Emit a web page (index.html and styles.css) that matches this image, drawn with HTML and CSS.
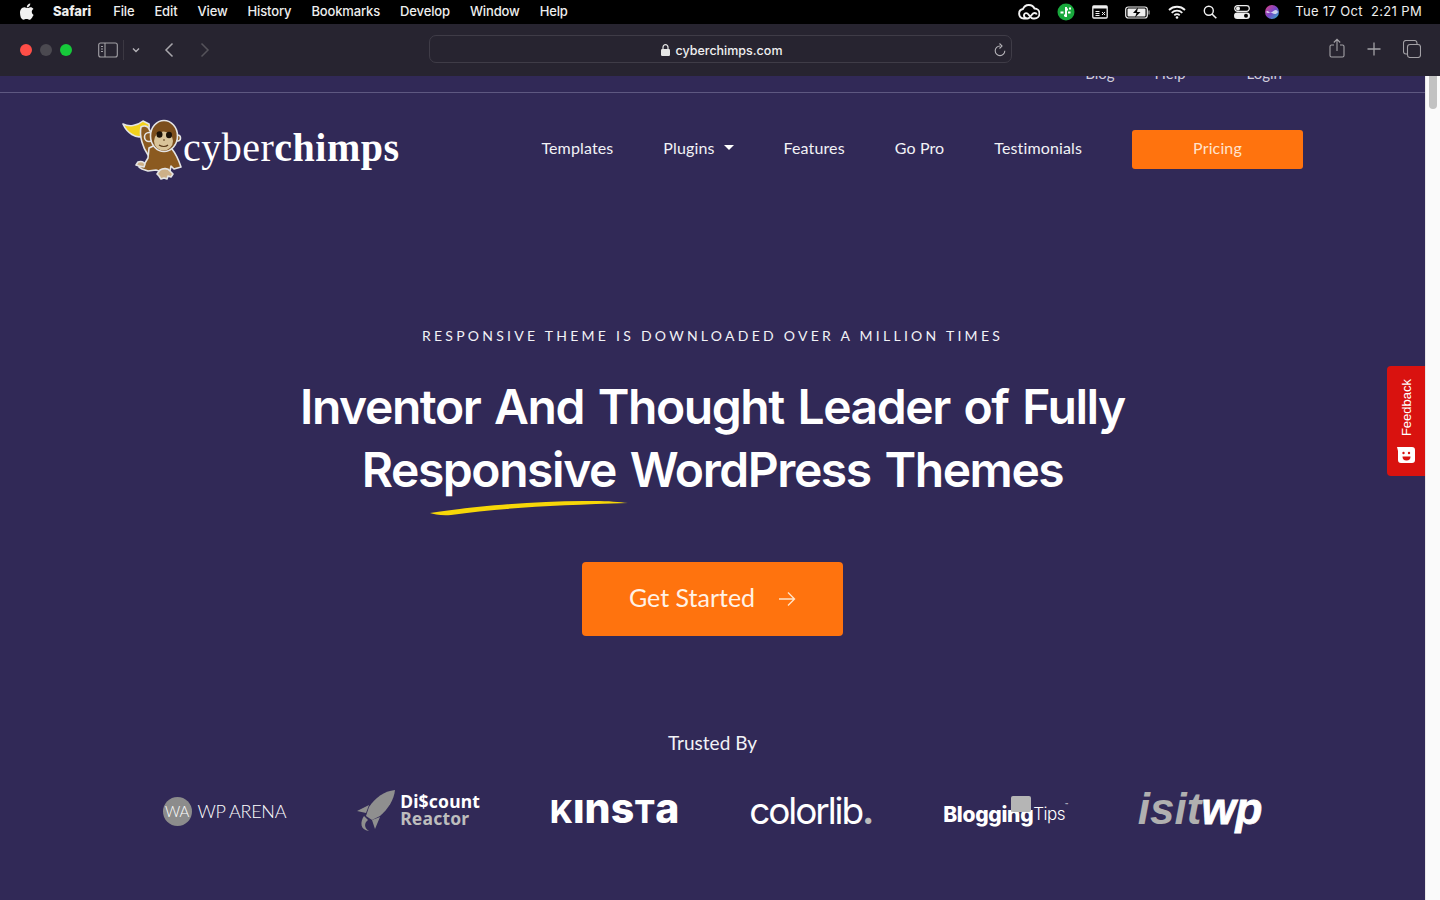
FILE: index.html
```html
<!DOCTYPE html>
<html lang="en">
<head>
<meta charset="utf-8">
<title>CyberChimps</title>
<link rel="stylesheet" href="styles.css">
</head>
<body>
<div class="menubar">
  <div class="menu-left">
    <svg class="apple" width="14" height="17" viewBox="0 0 14 17"><path fill="#f2f2f2" d="M10.3 0.5c.1 1.1-.3 2-1 2.8-.7.8-1.6 1.2-2.5 1.1-.1-1 .4-2 1-2.7C8.500 1 9.500.6 10.300.5zM13.300 12.300c-.4.9-.6 1.300-1.100 2.100-.7 1.100-1.700 2.400-2.900 2.400-1.100 0-1.400-.7-2.800-.7-1.500 0-1.800.7-2.900.7-1.200 0-2.100-1.200-2.800-2.300C-.200 11.400-.4 7.900 1 6.200 1.900 5 3.200 4.300 4.400 4.300c1.300 0 2 .8 3 .8s1.700-.8 3.100-.8c1.100 0 2.200.6 3 1.600-2.600 1.500-2.200 5.300.8 6.400z"/></svg>
    <span class="app-name">Safari</span><span>File</span><span>Edit</span><span>View</span><span>History</span><span>Bookmarks</span><span>Develop</span><span>Window</span><span>Help</span>
  </div>
  <div class="menu-right">
    <svg width="22" height="16" viewBox="0 0 22 16"><g fill="none" stroke="#f2f2f2" stroke-width="1.900"><path d="M8 14.500H5.800A4.800 4.800 0 0 1 5 5 6.300 6.300 0 0 1 16.500 4.500 5 5 0 0 1 16.500 14.500H15C13 14.500 12 12.500 10.500 10.500 9 8.500 6.500 8.800 6 11c-.3 2 1.500 3.500 3.500 3.500 2 0 3-2 4.500-4 1.500-2 4-2 4.800 0"/></g></svg>
    <svg width="18" height="18" viewBox="0 0 18 18"><circle cx="9" cy="9" r="8.500" fill="#18a83c"/><path d="M3.500 9.500h3M7 12.500h3M8 6.500h3M11 9.500h2.500M12 5.500h2M9 4v10" stroke="#fff" stroke-width="1.900" fill="none"/></svg>
    <svg width="16" height="14" viewBox="0 0 16 14"><rect x=".8" y="1" width="14.400" height="12" rx="1" fill="none" stroke="#eee" stroke-width="1.300"/><rect x="1" y="1" width="14" height="2.500" fill="#eee"/><path d="M3.500 6.500h4M3.500 8.500h4M3.500 10.500h4M10 7l3 3M13 7l-3 3" stroke="#eee"/></svg>
    <svg width="26" height="13" viewBox="0 0 26 13"><rect x=".7" y="1" width="21.600" height="11" rx="2.500" fill="none" stroke="#eee" stroke-width="1.200"/><rect x="2.500" y="2.500" width="18" height="8" rx="1" fill="#eee"/><path d="M13 1.500 8 7h3.500L10 11.500 15.500 6H12z" fill="#000"/><path d="M24 4.500v4" stroke="#888" stroke-width="1.500"/></svg>
    <svg width="18" height="14" viewBox="0 0 18 14"><g fill="none" stroke="#f2f2f2" stroke-width="1.800"><path d="M1 5a11.500 11.500 0 0 1 16 0M3.700 7.800a7.500 7.500 0 0 1 10.600 0M6.300 10.300a3.800 3.800 0 0 1 5.400 0"/></g><circle cx="9" cy="12.500" r="1.300" fill="#f2f2f2"/></svg>
    <svg width="14" height="14" viewBox="0 0 14 14"><circle cx="5.800" cy="5.800" r="4.500" fill="none" stroke="#f2f2f2" stroke-width="1.400"/><path d="m9 9 4.300 4.300" stroke="#f2f2f2" stroke-width="1.600"/></svg>
    <svg width="16" height="14" viewBox="0 0 16 14"><rect x=".7" y=".7" width="14.600" height="5.600" rx="2.800" fill="none" stroke="#eee" stroke-width="1.200"/><circle cx="4" cy="3.500" r="2" fill="#eee"/><rect y="7.500" width="16" height="6.500" rx="3.250" fill="#eee"/><circle cx="12" cy="10.750" r="2" fill="#000"/></svg>
    <svg class="siri" width="16" height="16" viewBox="0 0 16 16"><defs><linearGradient id="siri-a" x1="0" y1="0" x2="1" y2="1"><stop offset="0" stop-color="#e0407f"/><stop offset=".5" stop-color="#7a46c8"/><stop offset="1" stop-color="#24b6c8"/></linearGradient></defs><circle cx="8" cy="8" r="7" fill="url(#siri-a)"/><path d="M2 8c2-3 3 2 6 0s4-3 6 0c-2 3-4 2-6 1S4 10 2 8z" fill="#dfe6f6" opacity=".85"/></svg>
    <span class="clock">Tue 17 Oct&nbsp; 2:21 PM</span>
  </div>
</div>

<div class="toolbar">
  <div class="tool-left">
    <div class="lights"><i class="light red"></i><i class="light grey"></i><i class="light green"></i></div>
    <svg class="sidebar-icon" width="20" height="16" viewBox="0 0 20 16"><rect x=".7" y="1" width="18.600" height="14" rx="2" fill="none" stroke="#a3a1a6" stroke-width="1.100"/><path d="M7 1v14" stroke="#a3a1a6" stroke-width="1.100"/><path d="M3 4.500h2M3 7h2M3 9.500h2" stroke="#a3a1a6"/></svg>
    <i class="divider"></i>
    <svg class="chev" width="8" height="6" viewBox="0 0 8 6"><path d="m1 1.500 3 3 3-3" fill="none" stroke="#b5b3b8" stroke-width="1.400"/></svg>
    <svg class="back" width="10" height="16" viewBox="0 0 10 16"><path d="M8.500 1.500 2 8l6.500 6.500" fill="none" stroke="#a9a7ac" stroke-width="1.500"/></svg>
    <svg class="forward" width="10" height="16" viewBox="0 0 10 16"><path d="M1.500 1.500 8 8l-6.500 6.500" fill="none" stroke="#55535a" stroke-width="1.500"/></svg>
  </div>
  <div class="address">
    <span class="address-text"><svg width="9" height="12" viewBox="0 0 9 12"><rect y="5" width="9" height="7" rx="1.200" fill="#e6e6e6"/><path d="M2 5.500V3.200a2.500 2.500 0 0 1 5 0v2.300" fill="none" stroke="#e6e6e6" stroke-width="1.200"/></svg>cyberchimps.com</span>
    <svg class="reload" width="12" height="14" viewBox="0 0 12 14"><path d="M6 3a4.800 4.800 0 1 0 4.800 4.800" fill="none" stroke="#b5b3b8" stroke-width="1.100"/><path d="M5.500.5 8 3 5.500 5.500" fill="none" stroke="#b5b3b8" stroke-width="1.100"/></svg>
  </div>
  <div class="tool-right">
    <svg class="share" width="16" height="20" viewBox="0 0 16 20"><path d="M5 7H2.500A1.500 1.500 0 0 0 1 8.500v9A1.500 1.500 0 0 0 2.500 19h11a1.500 1.500 0 0 0 1.500-1.500v-9A1.500 1.500 0 0 0 13.500 7H11M8 13V1.500M4.800 4.500 8 1.300l3.200 3.200" fill="none" stroke="#a3a1a6" stroke-width="1.100"/></svg>
    <svg width="14" height="14" viewBox="0 0 14 14"><path d="M7 .5v13M.5 7h13" stroke="#a3a1a6" stroke-width="1.300"/></svg>
    <svg width="18" height="18" viewBox="0 0 18 18"><rect x="4.500" y="4.500" width="13" height="13" rx="2.500" fill="none" stroke="#a3a1a6" stroke-width="1.100"/><path d="M4.500 14H3a2.500 2.500 0 0 1-2.500-2.500V3A2.500 2.500 0 0 1 3 .5h8.500A2.500 2.500 0 0 1 14 3v1.500" fill="none" stroke="#a3a1a6" stroke-width="1.100"/></svg>
  </div>
</div>

<div class="viewport">
  <main class="page">
    <div class="topbar"><div class="topbar-links"><span>Blog</span><span>Help</span><span>Login</span></div></div>
    <header class="nav">
      <a class="logo">
        <svg width="62" height="62" viewBox="0 0 62 62">
          <g stroke="#e4e4e4" stroke-width="1.600" stroke-linejoin="round">
            <path d="M1 6c6 3 14 2 20-3l6 3c1 5-2 10-6 12-7 3-16-3-20-12z" fill="#f3d21c"/>
            <path d="M19 9c3-2 7-1 8 2l9 16-10 10C21 30 17 18 19 9z" fill="#8b5a20"/>
            <path d="M27 30c8-5 18-4 23 1 4 5 7 12 9 18l-7 2-3-3-1 5-8 1-6-2-8 1-6-2-3-2 6-4 3-5z" fill="#8b5a20"/>
            <path d="M38 52c3-2 8-2 10 1l3 3-2 3-3-1-1 3-3-1-3 1-2-3-2-2z" fill="#cdb088"/>
            <path d="M16 44c3-1 6 0 7 2l-1 3-5-1-3-1z" fill="#cdb088"/>
            <circle cx="27" cy="19" r="4.500" fill="#8b5a20"/>
            <circle cx="55.500" cy="20" r="3" fill="#8b5a20"/>
            <ellipse cx="42" cy="18" rx="13.500" ry="15.500" fill="#7c4e1c"/>
          </g>
          <ellipse cx="41.500" cy="23" rx="9.500" ry="9.500" fill="#d9c499"/>
          <ellipse cx="37.500" cy="16.500" rx="3" ry="3.200" fill="#1b1208"/>
          <ellipse cx="47" cy="17" rx="3" ry="3.200" fill="#1b1208"/>
          <path d="M37 27c3 2 7 2 9 0M41 22h2" stroke="#5a3a18" stroke-width="1.200" fill="none"/>
        </svg>
        <span class="wordmark">cyber<b>chimps</b></span>
      </a>
      <nav class="nav-links">
        <a>Templates</a>
        <a class="has-caret">Plugins<i class="caret"></i></a>
        <a>Features</a>
        <a>Go Pro</a>
        <a>Testimonials</a>
        <a class="pricing">Pricing</a>
      </nav>
    </header>
    <section class="hero">
      <p class="eyebrow">RESPONSIVE THEME IS DOWNLOADED OVER A MILLION TIMES</p>
      <h1>Inventor And Thought Leader of Fully<br>Responsive WordPress Themes</h1>
      <svg class="swash" width="200" height="17" viewBox="0 0 200 17"><path d="M1 14C40 8 110 1 165 2 180 2 190 3 199 4 130 6 70 9 22 16 12 17 5 15 1 14z" fill="#f7d708"/></svg>
      <a class="cta">Get Started<svg width="18" height="16" viewBox="0 0 18 16"><path d="M1 8h15.500M10 1.500 16.500 8 10 14.500" fill="none" stroke="#ffe3c7" stroke-width="1.400"/></svg></a>
      <p class="trusted">Trusted By</p>
      <div class="brands">
        <div class="brand wparena"><span class="wa-badge">WA</span><span>WP ARENA</span></div>
        <div class="brand discount">
          <svg width="40" height="42" viewBox="0 0 40 42"><path d="M39 0C28 1 19 8 13 17l-3 9 6 4 8-4C32 19 38 10 39 0z" fill="#8f8f8f"/><path d="M13 15 1 21l9 2zM24 27l-5 12-3-9z" fill="#8f8f8f"/><path d="M8 26c-4 6-4 14 5 15-5-3-5-8-1-11z" fill="#8f8f8f"/></svg>
          <span class="discount-text"><b>Di$count</b><b class="dim">Reactor</b></span>
        </div>
        <div class="brand kinsta"><span><span class="kinsta-cap">K</span>ıns<span class="kinsta-cap">T</span>a</span></div>
        <div class="brand colorlib">colorlib<em>.</em></div>
        <div class="brand blogging"><i class="bubble"></i><b>Blogging</b><span>Tips</span><sup>™</sup></div>
        <div class="brand isitwp"><span>isit</span><b>wp</b></div>
      </div>
    </section>
    <aside class="feedback">
      <span>Feedback</span>
      <svg width="18" height="16" viewBox="0 0 18 16"><path d="M0 0h15a3 3 0 0 1 3 3v10a3 3 0 0 1-3 3H4a3 3 0 0 1-3-3V4z" fill="#fff"/><circle cx="6.500" cy="6" r="1.200" fill="#d9120f"/><circle cx="12" cy="6" r="1.200" fill="#d9120f"/><path d="M5.500 9.500h8a4 4 0 0 1-8 0z" fill="#d9120f"/></svg>
    </aside>
  </main>
  <div class="scrollbar"><i class="thumb"></i></div>
</div>
</body>
</html>
```
FILE: styles.css
```css
* { box-sizing: border-box; }
html, body { margin: 0; height: 100%; overflow: hidden; }
body { display: flex; flex-direction: column; width: 1440px; height: 900px; font-family: "Inter", "Liberation Sans", sans-serif; background: #312957; }

.menubar { height: 24px; flex: none; background: #000; color: #eee; display: flex; justify-content: space-between; align-items: center; font-size: 13px; font-weight: 500; letter-spacing: -.14px; padding: 0 18px 0 20px; }
.menu-left { display: flex; align-items: center; gap: 20px; margin-top: -2px; }
.apple { margin-right: -1px; }
.app-name { font-weight: 800; margin-right: 2px; letter-spacing: 0; }
.menu-right { display: flex; align-items: center; gap: 17px; }
.siri { margin-left: -3px; }
.clock { margin: 0 0 2px -2px; letter-spacing: .35px; font-weight: 400; }

.toolbar { height: 52px; flex: none; background: #272430; display: grid; grid-template-columns: 429px 583px 1fr; align-items: center; position: relative; z-index: 2; }
.tool-left { display: flex; align-items: center; padding-left: 20px; }
.lights { display: flex; gap: 8px; margin-right: 26px; }
.light { width: 12px; height: 12px; border-radius: 50%; }
.red { background: #fe4e47; }
.grey { background: #4b4950; }
.green { background: #16c93a; }
.divider { width: 1px; height: 20px; background: #3b3842; margin: 0 5px; }
.chev { margin: 0 24px 0 3px; }
.forward { margin-left: 26px; }
.address { height: 28px; margin-bottom: 2px; border: 1px solid #3f3c47; border-radius: 7px; display: flex; align-items: center; justify-content: center; position: relative; color: #f0f0f0; font-size: 12.5px; font-weight: 500; padding: 2px 0 0 2px; }
.address-text { display: inline-flex; align-items: center; gap: 6px; }
.reload { position: absolute; right: 5px; top: 7px; }
.tool-right { display: flex; justify-content: flex-end; align-items: center; gap: 22px; padding-right: 19px; margin-bottom: 2px; }
.share { margin-top: -3px; }

.viewport { flex: 1; min-height: 0; display: flex; }
.page { flex: 1; position: relative; background: #312957; color: #fff; overflow: hidden; }
.scrollbar { width: 15px; flex: none; background: #fafafa; border-left: 1px solid #e8e8e8; padding: 0 3px; }
.thumb { display: block; width: 8px; height: 33px; border-radius: 0 0 4px 4px; background: #c2c2c2; }

.topbar { height: 17px; border-bottom: 1px solid #5e5881; display: flex; justify-content: flex-end; overflow: hidden; }
.topbar-links { display: flex; margin: -12px 143px 0 0; font-family: "Lato", sans-serif; font-size: 15px; color: #cfcdda; gap: 40px; height: 20px; }
.topbar-links span:last-child { margin-left: 21px; }

.nav { display: flex; align-items: center; justify-content: space-between; height: 112px; padding: 0 122px; }
.logo { display: flex; align-items: center; }
.logo svg { margin-right: -1px; }
.wordmark { font-family: "Liberation Serif", serif; font-size: 40px; letter-spacing: .5px; color: #fff; line-height: 1; margin-top: -2px; }
.wordmark b { font-weight: 700; }
.nav-links { display: flex; align-items: center; gap: 50px; font-size: 16px; letter-spacing: .13px; font-family: "Lato", sans-serif; color: #f2f2f6; }
.nav-links a { display: inline-flex; align-items: center; padding-bottom: 3px; }
.caret { width: 0; height: 0; border: 5px solid transparent; border-top-color: #fff; border-bottom: 0; margin-left: 9px; }
.nav-links .pricing { width: 171px; height: 39px; background: #ff730e; border-radius: 3px; justify-content: center; color: #ffe3cc; }

.hero { display: flex; flex-direction: column; align-items: center; }
.eyebrow { margin: 121px 0 0; font-family: "Lato", sans-serif; font-size: 14px; letter-spacing: 3.26px; line-height: 20px; color: #f2f2f6; }
h1 { margin: 29px 0 0; font-size: 48px; font-weight: 600; line-height: 63px; text-align: center; letter-spacing: -1.42px; word-spacing: 3px; }
.swash { margin: -2px 0 -1px -368px; display: block; }
.cta { margin-top: 47px; width: 261px; height: 74px; padding-bottom: 4px; background: #ff730e; border-radius: 4px; display: flex; align-items: center; justify-content: center; gap: 23px; font-family: "Lato", sans-serif; font-size: 25px; color: #fff2e6; }
.cta svg { margin-top: 4px; }
.trusted { margin: 95px 0 0; font-family: "Lato", sans-serif; font-size: 19px; line-height: 24px; color: #f2f2f6; }

.brands { display: flex; align-items: center; justify-content: space-between; width: 1100px; height: 60px; margin-top: 26px; }
.brand { display: flex; align-items: center; color: #fff; }
.wparena { font-family: "Lato", sans-serif; font-weight: 300; font-size: 18px; gap: 6px; letter-spacing: -.3px; }
.wa-badge { width: 29px; height: 29px; border-radius: 50%; background: #8c8c8c; display: flex; align-items: center; justify-content: center; font-size: 15px; font-weight: 300; }
.discount { gap: 4px; }
.discount-text { display: flex; flex-direction: column; font-family: "Noto Sans", sans-serif; font-size: 17.5px; line-height: 17px; letter-spacing: .2px; margin-top: -3px; }
.dim { color: #bdbdbd; }
.kinsta { font-family: "Inter", sans-serif; font-weight: 800; font-size: 41px; line-height: 1; margin-top: -6px; }
.kinsta-cap { font-size: 31px; }
.colorlib { font-family: "Inter", sans-serif; font-size: 37px; font-weight: 400; letter-spacing: -2.1px; margin: -2px 1px 0 0; }
.colorlib em { font-style: normal; color: #bdbdbd; font-weight: 700; }
.blogging { position: relative; font-family: "Inter", sans-serif; font-size: 21px; letter-spacing: -.3px; margin-top: 6px; }
.blogging b { font-weight: 800; }
.blogging span { font-weight: 300; font-size: 17px; letter-spacing: -.5px; }
.blogging sup { font-size: 5px; align-self: flex-start; }
.bubble { position: absolute; left: 68px; top: -6px; width: 20px; height: 16px; background: #b5b5b5; border-radius: 2px; }
.isitwp { font-family: "Liberation Sans", sans-serif; font-style: italic; font-weight: 700; font-size: 44px; line-height: 1; margin-top: -4px; }
.isitwp span { color: #b0b0b0; }
.isitwp b { -webkit-text-stroke: .8px #fff; }

.feedback { position: absolute; right: 0; top: 290px; width: 38px; height: 110px; background: #d9120f; border-radius: 4px 0 0 4px; display: flex; flex-direction: column; align-items: center; justify-content: center; gap: 10px; font-family: "Liberation Sans", sans-serif; font-size: 13px; color: #fff; }
.feedback span { writing-mode: vertical-rl; transform: rotate(180deg); }
```
